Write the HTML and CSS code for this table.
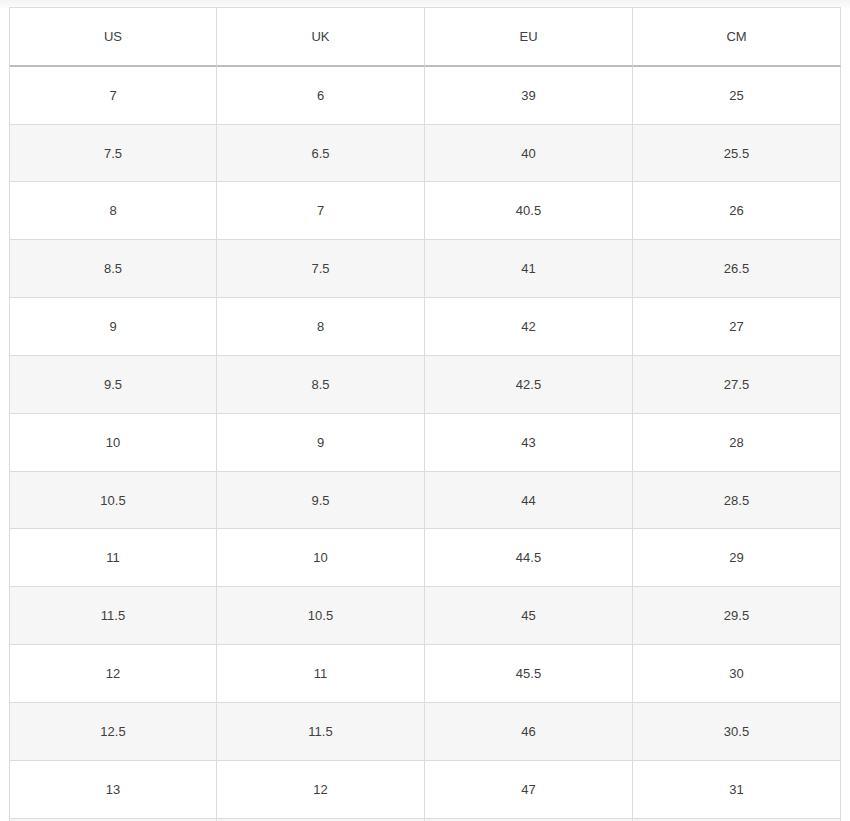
FILE: index.html
```html
<!DOCTYPE html>
<html lang="en">
<head>
<meta charset="utf-8">
<title>Size chart</title>
<link rel="stylesheet" href="styles.css">
</head>
<body>
<div class="wrap">
<table class="sizes">
<colgroup><col class="c1"><col class="c2"><col class="c2"><col class="c2"></colgroup>
<thead>
<tr><th>US</th><th>UK</th><th>EU</th><th>CM</th></tr>
</thead>
<tbody>
<tr><td>7</td><td>6</td><td>39</td><td>25</td></tr>
<tr><td>7.5</td><td>6.5</td><td>40</td><td>25.5</td></tr>
<tr><td>8</td><td>7</td><td>40.5</td><td>26</td></tr>
<tr><td>8.5</td><td>7.5</td><td>41</td><td>26.5</td></tr>
<tr><td>9</td><td>8</td><td>42</td><td>27</td></tr>
<tr><td>9.5</td><td>8.5</td><td>42.5</td><td>27.5</td></tr>
<tr><td>10</td><td>9</td><td>43</td><td>28</td></tr>
<tr><td>10.5</td><td>9.5</td><td>44</td><td>28.5</td></tr>
<tr><td>11</td><td>10</td><td>44.5</td><td>29</td></tr>
<tr><td>11.5</td><td>10.5</td><td>45</td><td>29.5</td></tr>
<tr><td>12</td><td>11</td><td>45.5</td><td>30</td></tr>
<tr><td>12.5</td><td>11.5</td><td>46</td><td>30.5</td></tr>
<tr><td>13</td><td>12</td><td>47</td><td>31</td></tr>
<tr><td>13.5</td><td>12.5</td><td>47.5</td><td>31.5</td></tr>
</tbody>
</table>
</div>
</body>
</html>
```

FILE: styles.css
```css
html {
  background: #fff linear-gradient(to bottom, #f4f4f4 0px, #ffffff 10px) no-repeat;
}
body {
  margin: 0;
  font-family: "Liberation Sans", Arial, Helvetica, sans-serif;
  font-size: 13px;
  color: #404040;
}
.wrap {
  padding: 7px 9px 0 9px;
}
.sizes {
  width: 832px;
  table-layout: fixed;
  border-collapse: separate;
  border-spacing: 0;
  border-left: 1px solid #dcdcdc;
  border-top: 1px solid #dcdcdc;
  background: #fff;
}
.c1 { width: 207px; }
.c2 { width: 208px; }
.sizes th,
.sizes td {
  padding: 20px 0 18px;
  line-height: 18.83px;
  text-align: center;
  font-weight: normal;
  border-right: 1px solid #dcdcdc;
  border-bottom: 1px solid #dcdcdc;
}
.sizes th {
  border-bottom: 2px solid #bdbdbd;
}
.sizes tbody tr:nth-child(even) td {
  background: #f6f6f6;
}
```
